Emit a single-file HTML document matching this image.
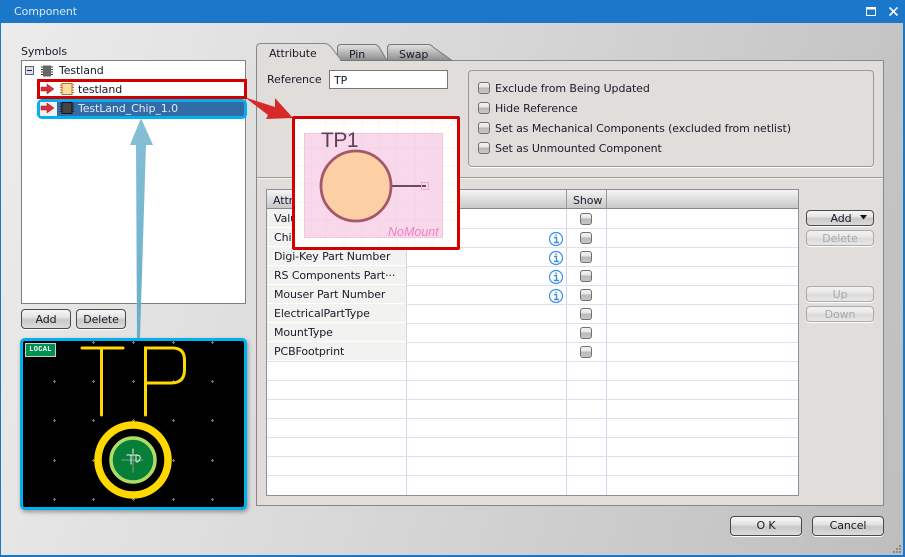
<!DOCTYPE html>
<html><head><meta charset="utf-8"><style>
html,body{margin:0;padding:0}
body{width:905px;height:557px;overflow:hidden;position:relative;font-family:"DejaVu Sans","Liberation Sans",sans-serif;font-size:11px;letter-spacing:-.1px;color:#1a1a2a}
div,span{position:absolute;box-sizing:border-box}
.t{white-space:nowrap;line-height:14px;transform:translateY(1px)}
.btn{border:1px solid #4a4a4a;border-radius:4px;background:linear-gradient(#f6f6f6 0,#e4e4e4 40%,#c8c8c8 55%,#dcdcdc 100%);text-align:center;box-shadow:0 1px 0 #fff;white-space:nowrap}
.dis{border-color:#aaa;color:#a8a8a8;background:linear-gradient(#f2f2f2 0,#e8e8e8 40%,#dadada 55%,#e8e8e8 100%)}
.cb{width:12px;height:12px;border:1px solid #707070;border-radius:3px;background:linear-gradient(#f2f2f2 0,#e6e6e6 40%,#b8b8b8 50%,#c8c8c8 100%)}
.hl{left:267px;width:531px;height:1px;background:#e0e0ea}
.lb{left:267px;width:139px;height:18px;background:#f2f2f0;padding-left:7px;line-height:19px;white-space:nowrap;overflow:hidden}
</style></head><body>
<div style="left:0;top:0;width:905px;height:557px;background:linear-gradient(105deg,#ececec 0,#d6d6d6 50%,#bebebe 100%);border:1px solid #1a77c9;border-width:0 2px 2px 1px"></div>
<div style="left:0;top:0;width:905px;height:23px;background:#1a77c9"></div>
<div class="t" style="left:14px;top:4px;color:#dce9f6;font-size:11px">Component</div>
<svg style="position:absolute;left:860px;top:0" width="45" height="23"><path d="M6.500 7.500h9v8h-9z" fill="none" stroke="#fff"/><path d="M6 8.500h10" stroke="#fff" stroke-width="2"/><path d="M29.500 7.500l8 8M37.500 7.500l-8 8" stroke="#fff" stroke-width="1.600"/></svg>

<div class="t" style="left:21px;top:44px">Symbols</div>
<div style="left:21px;top:60px;width:225px;height:244px;background:#fff;border:1px solid #808080"></div>
<div style="left:25px;top:66px;width:9px;height:9px;border:1px solid #567;background:#dde"></div>
<div style="left:27px;top:70px;width:5px;height:1px;background:#223"></div>
<svg style="position:absolute;left:40px;top:64px" width="14" height="14"><rect x="3" y="1.500" width="8" height="11" fill="#666"/><path d="M1 3h2M1 5.500h2M1 8h2M1 10.500h2M11 3h2M11 5.500h2M11 8h2M11 10.500h2" stroke="#333"/></svg>
<div class="t" style="left:59px;top:63px">Testland</div>

<div style="left:37px;top:99px;width:210px;height:20px;background:#326ca6;border:3px solid #00b0f0;border-radius:5px"></div>
<div style="left:40px;top:102px;width:17px;height:14px;background:#f0f0f0"></div>
<div style="left:37px;top:79px;width:210px;height:20px;background:#fff;border:3px solid #d40000"></div>
<svg style="position:absolute;left:40px;top:82px" width="16" height="32"><path d="M1 5h6V2l7 5-7 5V9H1z" fill="#d8303a" stroke="#a01820" stroke-width=".5"/><path d="M1 24h6v-3l7 5-7 5v-3H1z" fill="#d8303a" stroke="#a01820" stroke-width=".5"/></svg>
<svg style="position:absolute;left:59px;top:82px" width="16" height="34"><rect x="3" y="1.500" width="10" height="11" fill="#f8dca0" stroke="#b07830"/><path d="M1 3h2M1 5.500h2M1 8h2M1 10.500h2M13 3h2M13 5.500h2M13 8h2M13 10.500h2" stroke="#d86a20"/><rect x="3" y="20.500" width="10" height="11" fill="#444" stroke="#111"/><path d="M1 22h2M1 24.500h2M1 27h2M1 29.500h2M13 22h2M13 24.500h2M13 27h2M13 29.500h2" stroke="#222"/></svg>
<div class="t" style="left:78px;top:82px">testland</div>
<div class="t" style="left:78px;top:101px;color:#dfe8f2">TestLand_Chip_1.0</div>

<div class="btn" style="left:21px;top:309px;width:50px;height:20px;line-height:20px">Add</div>
<div class="btn" style="left:76px;top:309px;width:50px;height:20px;line-height:20px">Delete</div>

<!-- main panel -->
<div style="left:256px;top:60px;width:628px;height:446px;background:#e0dddb;border:1px solid #888"></div>
<svg style="position:absolute;left:256px;top:42px" width="200" height="20"><defs><linearGradient id="tg" x1="0" y1="0" x2="0" y2="1"><stop offset="0" stop-color="#e4e4e4"/><stop offset="1" stop-color="#8c8c8c"/></linearGradient></defs>
<path d="M81.500 18.500V6Q81.500 2.500 85 2.500H118Q121 2.500 123 5L131 18.500z" fill="url(#tg)" stroke="#777"/>
<path d="M131.500 18.500V6Q131.500 2.500 135 2.500H172Q175 2.500 177 5L196 18.500z" fill="url(#tg)" stroke="#777"/>
<path d="M.5 18.500V6Q.5 1.500 5 1.500H69Q72 1.500 75 5L85 18" fill="#e0dddb" stroke="#888"/><path d="M1 18h83v2H1z" fill="#e0dddb"/></svg>
<div class="t" style="left:269px;top:46px">Attribute</div>
<div class="t" style="left:349px;top:47px">Pin</div>
<div class="t" style="left:399px;top:47px">Swap</div>

<div class="t" style="left:267px;top:72px">Reference</div>
<div style="left:329px;top:70px;width:119px;height:19px;background:#fff;border:1px solid #777"></div>
<div class="t" style="left:334px;top:73px">TP</div>

<div style="left:468px;top:70px;width:406px;height:97px;border:1px solid #999;border-radius:4px;box-shadow:0 1px 0 #fff"></div>
<div class="cb" style="left:478px;top:82px"></div><div class="t" style="left:495px;top:81px">Exclude from Being Updated</div>
<div class="cb" style="left:478px;top:102px"></div><div class="t" style="left:495px;top:101px">Hide Reference</div>
<div class="cb" style="left:478px;top:122px"></div><div class="t" style="left:495px;top:121px">Set as Mechanical Components (excluded from netlist)</div>
<div class="cb" style="left:478px;top:142px"></div><div class="t" style="left:495px;top:141px">Set as Unmounted Component</div>
<div style="left:257px;top:177px;width:626px;height:1px;background:#999"></div>
<div style="left:257px;top:178px;width:626px;height:1px;background:#f4f4f4"></div>

<!-- table -->
<div style="left:266px;top:189px;width:533px;height:307px;background:#fff;border:1px solid #8890a0"></div>
<div style="left:267px;top:190px;width:531px;height:19px;background:linear-gradient(#f4f4f4,#c8c8c8);border-bottom:1px solid #888"></div>
<div class="t" style="left:273px;top:193px">Attribute</div>
<div class="t" style="left:573px;top:193px">Show</div>
<div style="left:566px;top:190px;width:1px;height:19px;background:#999"></div>
<div style="left:606px;top:190px;width:1px;height:19px;background:#999"></div>
<div style="left:406px;top:209px;width:1px;height:286px;background:#d4d4e6"></div>
<div style="left:566px;top:209px;width:1px;height:286px;background:#d4d4e6"></div>
<div style="left:606px;top:209px;width:1px;height:286px;background:#d4d4e6"></div>
<div class="hl" style="top:228px"></div><div class="hl" style="top:247px"></div><div class="hl" style="top:266px"></div><div class="hl" style="top:285px"></div><div class="hl" style="top:304px"></div><div class="hl" style="top:323px"></div><div class="hl" style="top:342px"></div><div class="hl" style="top:361px"></div><div class="hl" style="top:380px"></div><div class="hl" style="top:399px"></div><div class="hl" style="top:418px"></div><div class="hl" style="top:437px"></div><div class="hl" style="top:456px"></div><div class="hl" style="top:475px"></div>
<div class="lb" style="top:209px">Value</div>
<div class="lb" style="top:228px">Chip Part Number</div>
<div class="lb" style="top:247px">Digi-Key Part Number</div>
<div class="lb" style="top:266px">RS Components Part···</div>
<div class="lb" style="top:285px">Mouser Part Number</div>
<div class="lb" style="top:304px">ElectricalPartType</div>
<div class="lb" style="top:323px">MountType</div>
<div class="lb" style="top:342px">PCBFootprint</div>
<div class="cb" style="left:580px;top:213px"></div><div class="cb" style="left:580px;top:232px"></div><div class="cb" style="left:580px;top:251px"></div><div class="cb" style="left:580px;top:270px"></div><div class="cb" style="left:580px;top:289px"></div><div class="cb" style="left:580px;top:308px"></div><div class="cb" style="left:580px;top:327px"></div><div class="cb" style="left:580px;top:346px"></div>
<svg style="position:absolute;left:548px;top:231px" width="16" height="72" fill="none" stroke="#3b8ee8" stroke-width="1.200"><g><circle cx="8" cy="8" r="6.500"/><path d="M6 6.500h2.500v5M6 11.500h5M8 3.500v1.500" stroke-width="1.400"/></g><g transform="translate(0,19)"><circle cx="8" cy="8" r="6.500"/><path d="M6 6.500h2.500v5M6 11.500h5M8 3.500v1.500" stroke-width="1.400"/></g><g transform="translate(0,38)"><circle cx="8" cy="8" r="6.500"/><path d="M6 6.500h2.500v5M6 11.500h5M8 3.500v1.500" stroke-width="1.400"/></g><g transform="translate(0,57)"><circle cx="8" cy="8" r="6.500"/><path d="M6 6.500h2.500v5M6 11.500h5M8 3.500v1.500" stroke-width="1.400"/></g></svg>

<div class="btn" style="left:806px;top:210px;width:68px;height:16px;line-height:16px;padding-left:2px">Add</div>
<svg style="position:absolute;left:860px;top:215px" width="9" height="6"><path d="M0 0h7L3.500 4.500z" fill="#111"/></svg>
<div class="btn dis" style="left:806px;top:230px;width:68px;height:16px;line-height:15px">Delete</div>
<div class="btn dis" style="left:806px;top:286px;width:68px;height:16px;line-height:15px">Up</div>
<div class="btn dis" style="left:806px;top:306px;width:68px;height:16px;line-height:15px">Down</div>
<div class="btn" style="left:730px;top:516px;width:72px;height:20px;line-height:18px">O K</div>
<div class="btn" style="left:812px;top:516px;width:72px;height:20px;line-height:18px">Cancel</div>
<svg style="position:absolute;left:892px;top:544px" width="10" height="10" fill="#888"><rect x="7" y="1" width="2" height="2"/><rect x="4" y="4" width="2" height="2"/><rect x="7" y="4" width="2" height="2"/><rect x="1" y="7" width="2" height="2"/><rect x="4" y="7" width="2" height="2"/><rect x="7" y="7" width="2" height="2"/></svg>

<!-- PCB preview -->
<div style="left:20px;top:338px;width:227px;height:172px;background:#000;border:3px solid #00b0f0;border-radius:5px;box-shadow:1px 2px 4px rgba(0,0,0,.35)"></div>
<svg style="position:absolute;left:23px;top:341px" width="221" height="166" shape-rendering="crispEdges">
<g stroke="#777"><path d="M70.500 0v3M69 1.500h3M110.500 0v3M109 1.500h3M150.500 0v3M149 1.500h3M189.500 0v3M188 1.500h3"/>
<path d="M31.500 39v3M30 40.500h3M70.500 39v3M69 40.500h3M110.500 39v3M109 40.500h3M150.500 39v3M149 40.500h3M189.500 39v3M188 40.500h3"/>
<path d="M31.500 78v3M30 79.500h3M70.500 78v3M69 79.500h3M110.500 78v3M109 79.500h3M150.500 78v3M149 79.500h3M189.500 78v3M188 79.500h3"/>
<path d="M31.500 118v3M30 119.500h3M70.500 118v3M69 119.500h3M150.500 118v3M149 119.500h3M189.500 118v3M188 119.500h3"/>
<path d="M31.500 157v3M30 158.500h3M70.500 157v3M69 158.500h3M110.500 157v3M109 158.500h3M150.500 157v3M149 158.500h3M189.500 157v3M188 158.500h3"/></g>
<g shape-rendering="auto" fill="none" stroke-linecap="round">
<path d="M59 7h41M78.500 7v67M122.500 74V7h27Q161.500 7 161.500 19V29Q161.500 42 148 42H122.500" stroke="#ffd800" stroke-width="3"/>
<circle cx="110" cy="119" r="35" stroke="#ffd800" stroke-width="7.500"/>
<circle cx="110" cy="119" r="22" fill="#077f38" stroke="#b0dc64" stroke-width="3.500"/>
<path d="M99 119h21M110 109v22" stroke="#8a9a90" stroke-width="1"/>
<path d="M104 114h8M108 114v10M113 114q5 0 4 4q-1 3-4 3v-7M110 108v5" stroke="#fff" stroke-width="1" stroke-dasharray="1.500 1"/>
</g></svg>
<div style="left:25px;top:343px;width:31px;height:14px;background:#009050;border:1px solid #ccc;color:#fff;font:bold 7px/12px 'Liberation Mono',monospace;text-align:center;letter-spacing:.3px">LOCAL</div>

<!-- arrows -->
<svg style="position:absolute;left:120px;top:110px" width="200" height="235"><defs><linearGradient id="g" x1="0" y1="0" x2="0" y2="1"><stop offset="0" stop-color="#80bcd4"/><stop offset="1" stop-color="#60aac8"/></linearGradient></defs><path d="M21 8L33 35H26L20 228H17L16 35H10z" fill="url(#g)" opacity=".95"/></svg>
<svg style="position:absolute;left:245px;top:95px" width="60" height="30"><path d="M2 3L30 12V3L48 23 21 24 23 20 2 4z" fill="#d62a2a"/></svg>

<!-- popup -->
<div style="left:292px;top:116px;width:168px;height:134px;background:#fff;border:3px solid #d40000;border-radius:2px"></div>
<div style="left:304px;top:133px;width:139px;height:105px;background:#fad8ec;border:1px dotted #f4b0d6"></div>
<svg style="position:absolute;left:295px;top:120px" width="162" height="127" fill="none">
<path d="M31 0V127M49 0V127M67 0V127M84 0V127M102 0V127M120 0V127M137 0V127M0 28H162M0 46H162M0 64H162M0 82H162M0 100H162" stroke="#bbb" stroke-opacity=".12"/>
<path d="M96 66H131" stroke="#6a4a62" stroke-width="2"/>
<rect x="126.500" y="62.500" width="7" height="7" stroke="#f4a8d0"/>
<circle cx="61" cy="66" r="35" fill="#fcd0a4" stroke="#a4586c" stroke-width="2.800"/>
</svg>
<div class="t" style="left:321px;top:129px;font:21px/22px 'Liberation Sans',sans-serif;letter-spacing:-.5px;color:#5c4058">TP1</div>
<div class="t" style="left:388px;top:224px;font:italic 12.500px/14px 'Liberation Sans',sans-serif;letter-spacing:0;color:#f080c0">NoMount</div>
</body></html>
